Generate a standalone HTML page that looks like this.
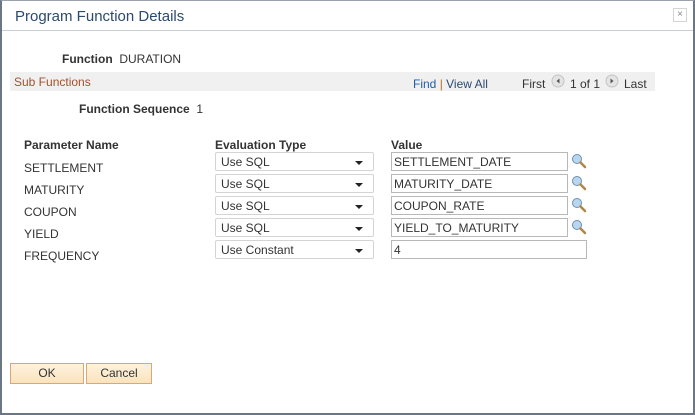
<!DOCTYPE html>
<html><head><style>
*{margin:0;padding:0;box-sizing:border-box}
body{width:695px;height:415px;overflow:hidden;background:#fff;font-family:"Liberation Sans",Arial,sans-serif;font-size:12px;color:#333;position:relative}
.frame{position:absolute;left:0;top:0;width:695px;height:415px;border:2px solid #6b7787;border-top:1px solid #9aa3ad}
.a{position:absolute;white-space:nowrap}
.title{left:15px;top:8px;font-size:15px;color:#2b4a6e}
.sep{position:absolute;left:2px;right:2px;top:30px;height:1px;background:#c9ced4}
.close{position:absolute;left:673px;top:8px;width:14px;height:14px;border:1px solid #d4d4d4;font-size:10px;color:#888;text-align:center;line-height:12px}
b{font-weight:bold}
.bar{position:absolute;left:10px;top:72px;width:645px;height:19px;background:#f0f0f0}
.sel{position:absolute;left:215px;width:159px;height:19px;border:1px solid #d4d4d4;border-radius:2px;background:#fff;padding:2px 5px;font-size:12px}
.sel:after{content:"";position:absolute;right:10px;top:8px;border-left:4px solid transparent;border-right:4px solid transparent;border-top:4px solid #222}
.inp{position:absolute;left:391px;width:177px;height:19px;border:1px solid #b8b8b8;background:#fff;padding:2px 2px;font-size:12px}
.lk{position:absolute;left:571px;width:16px;height:16px}
.btn{position:absolute;top:363px;height:21px;border:1px solid #d9a874;background:linear-gradient(#fdf2dd,#fbe3bd);text-align:center;line-height:19px;font-size:12px;color:#333}
</style></head><body>
<div class="frame"></div>
<div class="a title">Program Function Details</div>
<div class="sep"></div>
<div class="close">×</div>
<div class="a" style="left:62px;top:52px"><b>Function</b>&nbsp; DURATION</div>
<div class="bar"></div>
<div class="a" style="left:14px;top:75px;color:#a0522d">Sub Functions</div>
<div class="a" style="left:413px;top:77px;color:#2b4a6e"><span style="color:#1f5ea8">Find</span> <span style="color:#c46b1c">|</span> View All</div>
<div class="a" style="left:522px;top:77px;color:#333">First</div>
<svg class="a" style="left:551px;top:74px" width="14" height="14"><circle cx="7" cy="7" r="6" fill="#e4e4e4" stroke="#c4c4c4"/><path d="M8.5 4.5L5.5 7L8.5 9.5Z" fill="#555"/></svg>
<div class="a" style="left:570px;top:77px">1 of 1</div>
<svg class="a" style="left:605px;top:74px" width="14" height="14"><circle cx="7" cy="7" r="6" fill="#e4e4e4" stroke="#c4c4c4"/><path d="M5.5 4.5L8.5 7L5.5 9.5Z" fill="#555"/></svg>
<div class="a" style="left:624px;top:77px">Last</div>
<div class="a" style="left:79px;top:102px"><b>Function Sequence</b>&nbsp; 1</div>
<div class="a" style="left:24px;top:138px"><b>Parameter Name</b></div>
<div class="a" style="left:215px;top:138px"><b>Evaluation Type</b></div>
<div class="a" style="left:391px;top:138px"><b>Value</b></div>

<div class="a" style="left:24px;top:161px">SETTLEMENT</div>
<div class="a" style="left:24px;top:183px">MATURITY</div>
<div class="a" style="left:24px;top:205px">COUPON</div>
<div class="a" style="left:24px;top:227px">YIELD</div>
<div class="a" style="left:24px;top:249px">FREQUENCY</div>

<div class="sel" style="top:152px">Use SQL</div>
<div class="sel" style="top:174px">Use SQL</div>
<div class="sel" style="top:196px">Use SQL</div>
<div class="sel" style="top:218px">Use SQL</div>
<div class="sel" style="top:240px">Use Constant</div>

<div class="inp" style="top:152px">SETTLEMENT_DATE</div>
<div class="inp" style="top:174px">MATURITY_DATE</div>
<div class="inp" style="top:196px">COUPON_RATE</div>
<div class="inp" style="top:218px">YIELD_TO_MATURITY</div>
<div class="inp" style="top:240px;width:196px">4</div>

<svg class="lk" style="top:153px" viewBox="0 0 16 16"><circle cx="6" cy="6" r="4.5" fill="#b9d6f0" stroke="#6f8fb0"/><path d="M9.5 9.5L14 14" stroke="#b0864a" stroke-width="2.5" stroke-linecap="round"/></svg>
<svg class="lk" style="top:175px" viewBox="0 0 16 16"><circle cx="6" cy="6" r="4.5" fill="#b9d6f0" stroke="#6f8fb0"/><path d="M9.5 9.5L14 14" stroke="#b0864a" stroke-width="2.5" stroke-linecap="round"/></svg>
<svg class="lk" style="top:197px" viewBox="0 0 16 16"><circle cx="6" cy="6" r="4.5" fill="#b9d6f0" stroke="#6f8fb0"/><path d="M9.5 9.5L14 14" stroke="#b0864a" stroke-width="2.5" stroke-linecap="round"/></svg>
<svg class="lk" style="top:219px" viewBox="0 0 16 16"><circle cx="6" cy="6" r="4.5" fill="#b9d6f0" stroke="#6f8fb0"/><path d="M9.5 9.5L14 14" stroke="#b0864a" stroke-width="2.5" stroke-linecap="round"/></svg>

<div class="btn" style="left:10px;width:74px">OK</div>
<div class="btn" style="left:86px;width:66px">Cancel</div>
</body></html>
